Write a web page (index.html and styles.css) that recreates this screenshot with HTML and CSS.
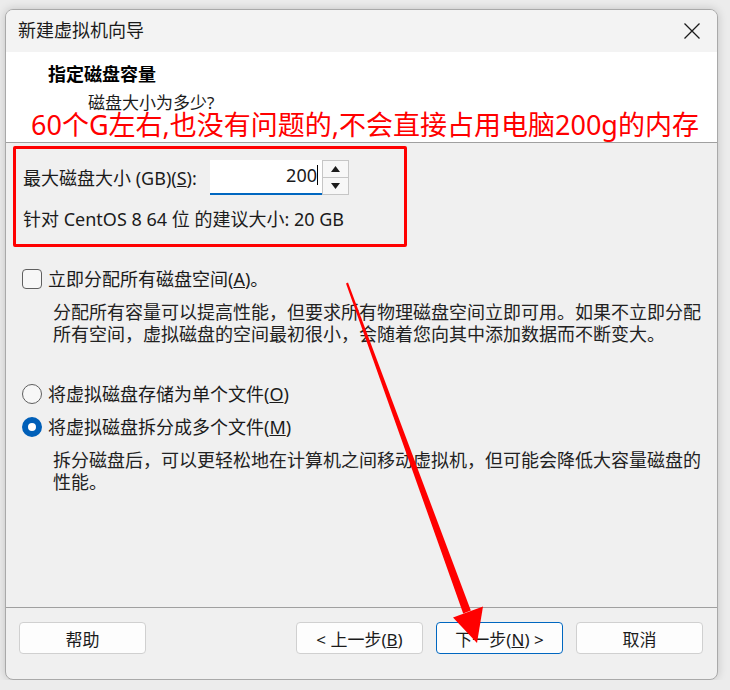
FILE: index.html
```html
<!DOCTYPE html>
<html lang="zh-CN">
<head>
    <meta charset="UTF-8">
    <meta name="viewport" content="width=device-width, initial-scale=1.0">
    <title>新建虚拟机向导</title>
    <link rel="stylesheet" href="styles.css">
</head>
<body>
    <div class="window">
        <div class="titlebar">
            <span class="title">新建虚拟机向导</span>
            <span class="close">
                <svg width="16" height="16" viewBox="0 0 16 16"><path d="M0.5 0.5 L15.5 15.5 M15.5 0.5 L0.5 15.5" stroke="#1b1b1b" stroke-width="1.3" fill="none"/></svg>
            </span>
        </div>

        <div class="header">
            <div class="step-title">指定磁盘容量</div>
            <div class="step-desc">磁盘大小为多少?</div>
            <div class="note">60个G左右,也没有问题的,不会直接占用电脑200g的内存</div>
        </div>

        <div class="content">
            <div class="size-box">
                <div class="size-row">
                    <label class="size-label">最大磁盘大小 (GB)(<u>S</u>):</label>
                    <div class="spin">
                        <div class="spin-input">200<span class="caret"></span></div>
                        <div class="spin-btns">
                            <span class="spin-btn">
                                <svg width="9" height="6" viewBox="0 0 9 6"><path d="M4.5 0 L9 6 L0 6 Z" fill="#1b1b1b"/></svg>
                            </span>
                            <span class="spin-btn">
                                <svg width="9" height="6" viewBox="0 0 9 6"><path d="M0 0 L9 0 L4.5 6 Z" fill="#1b1b1b"/></svg>
                            </span>
                        </div>
                    </div>
                </div>
                <div class="hint">针对 CentOS 8 64 位 的建议大小: 20 GB</div>
            </div>

            <div class="option option-check">
                <span class="checkbox"></span>
                <span>立即分配所有磁盘空间(<u>A</u>)。</span>
            </div>
            <p class="desc">分配所有容量可以提高性能，但要求所有物理磁盘空间立即可用。如果不立即分配所有空间，虚拟磁盘的空间最初很小，会随着您向其中添加数据而不断变大。</p>

            <div class="option option-radio1">
                <span class="radio"></span>
                <span>将虚拟磁盘存储为单个文件(<u>O</u>)</span>
            </div>
            <div class="option option-radio2">
                <span class="radio checked"></span>
                <span>将虚拟磁盘拆分成多个文件(<u>M</u>)</span>
            </div>
            <p class="desc desc-split">拆分磁盘后，可以更轻松地在计算机之间移动虚拟机，但可能会降低大容量磁盘的性能。</p>
        </div>

        <div class="footer">
            <button class="btn">帮助</button>
            <div class="spacer"></div>
            <button class="btn">&lt; 上一步(<u>B</u>)</button>
            <button class="btn btn-default">下一步(<u>N</u>) &gt;</button>
            <button class="btn">取消</button>
        </div>
    </div>

    <svg class="arrow" width="730" height="690" viewBox="0 0 730 690">
        <polygon points="346,283.4 348,282.6 470.8,610.6 463.2,613.4" fill="#ff0000"/>
        <polygon points="453,617.5 483,606.5 477,643" fill="#ff0000"/>
    </svg>
</body>
</html>
```

FILE: styles.css
```css
body {
    margin: 0;
    padding: 9px 0 0 5px;
    background-color: #ececec;
    font-family: "Noto Sans", "Noto Sans CJK SC", sans-serif;
    font-size: 18px;
    color: #1b1b1b;
}

.window {
    width: 713px;
    height: 671px;
    box-sizing: border-box;
    border: 1px solid #a9a9a9;
    border-radius: 8px;
    overflow: hidden;
    background-color: #f0f0f0;
    box-shadow: 0 0 10px rgba(0, 0, 0, 0.18);
    display: flex;
    flex-direction: column;
}

.titlebar {
    height: 42px;
    flex: none;
    background-color: #f3f3f3;
    display: flex;
    align-items: center;
    padding: 0 17px 0 12px;
}

.title {
    flex: 1;
    font-size: 18px;
    line-height: 24px;
    margin-top: -2px;
}

.close {
    display: flex;
}

.header {
    height: 80px;
    flex: none;
    background-color: #fff;
    border-bottom: 1px solid #a0a0a0;
    padding-top: 10px;
}

.header .step-title {
    padding-left: 42px;
    font-size: 18px;
    font-weight: bold;
    line-height: 24px;
    color: #000;
}

.header .step-desc {
    padding-left: 82px;
    font-size: 17px;
    line-height: 18px;
    margin-top: 8px;
}

.note {
    padding-left: 25px;
    font-size: 27px;
    line-height: 26px;
    color: #ff0000;
    white-space: nowrap;
}

.content {
    flex: 1;
    padding-left: 7px;
}

.size-box {
    width: 394px;
    height: 101px;
    box-sizing: border-box;
    margin-top: 3px;
    border: 3px solid #ff0000;
    border-radius: 2px;
    padding: 11px 0 0 7px;
}

.size-row {
    display: flex;
    align-items: center;
    height: 35px;
}

.size-label {
    width: 187px;
    line-height: 22px;
}

.spin {
    display: flex;
    height: 35px;
}

.spin-input {
    width: 112px;
    box-sizing: border-box;
    background-color: #fff;
    border-bottom: 2px solid #0067c0;
    text-align: right;
    padding-right: 4px;
    line-height: 31px;
}

.caret {
    display: inline-block;
    width: 1px;
    height: 20px;
    background-color: #000;
    vertical-align: -3px;
}

.spin-btns {
    width: 27px;
    display: flex;
    flex-direction: column;
    border: 1px solid #c6c6c6;
    box-sizing: border-box;
    background-color: #f7f7f7;
}

.spin-btn {
    flex: 1;
    display: flex;
    align-items: center;
    justify-content: center;
}

.spin-btn + .spin-btn {
    border-top: 1px solid #c6c6c6;
}

.hint {
    margin-top: 13px;
    line-height: 22px;
}

.option {
    display: flex;
    align-items: center;
    height: 20px;
    margin-left: 9px;
    gap: 6px;
    line-height: 20px;
}

.option-check {
    margin-top: 22px;
}

.option-radio1 {
    margin-top: 40px;
}

.option-radio2 {
    margin-top: 13px;
}

.checkbox {
    width: 18px;
    height: 18px;
    border: 1px solid #5f5f5f;
    border-radius: 4px;
    background-color: #f7f7f7;
}

.radio {
    width: 18px;
    height: 18px;
    border: 1px solid #5f5f5f;
    border-radius: 50%;
    background-color: #f7f7f7;
}

.radio.checked {
    width: 8px;
    height: 8px;
    border: 6px solid #005fb8;
    background-color: #fff;
}

.desc {
    width: 650px;
    margin: 11px 0 0 40px;
    font-family: "Noto Sans CJK SC", sans-serif;
    line-height: 22px;
    color: #222;
}

.desc-split {
    margin-top: 11px;
}

.footer {
    height: 57px;
    flex: none;
    border-top: 1px solid #a0a0a0;
    display: flex;
    align-items: flex-start;
    padding: 14px 14px 0 13px;
    gap: 13px;
}

.spacer {
    flex: 1;
}

.btn {
    width: 127px;
    height: 32px;
    border: 1px solid #d0d0d0;
    border-radius: 4px;
    background-color: #fdfdfd;
    font-family: inherit;
    font-size: 17px;
    color: #1b1b1b;
    padding: 0;
}

.btn-default {
    border-color: #0067c0;
}

.arrow {
    position: absolute;
    left: 0;
    top: 0;
    pointer-events: none;
}
```
